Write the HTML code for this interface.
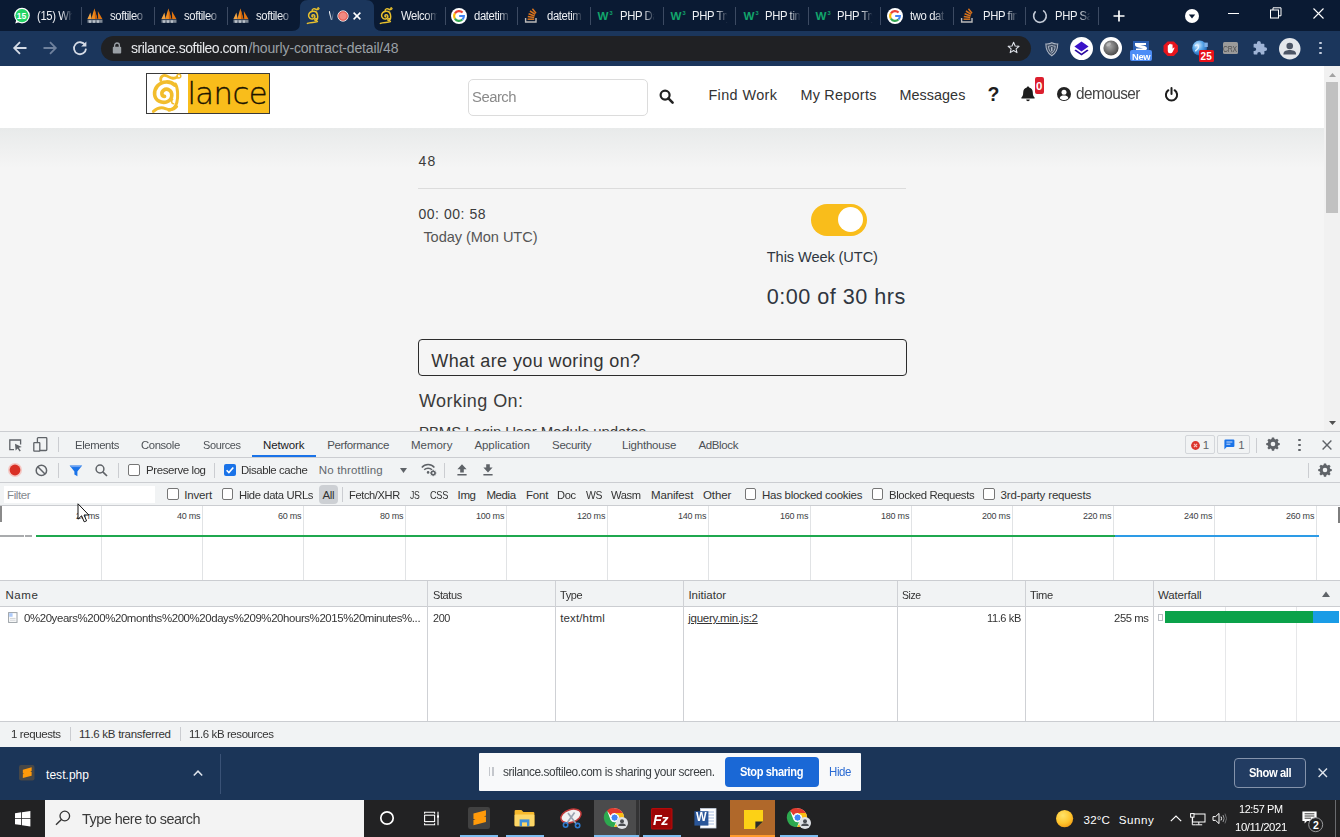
<!DOCTYPE html>
<html lang="en"><head><meta charset="utf-8"><title>srilance - hourly contract detail</title>
<style>
html,body{margin:0;padding:0}
body{width:1340px;height:837px;overflow:hidden;position:relative;background:#f7f7f7;font-family:"Liberation Sans",sans-serif}
.a{position:absolute;box-sizing:border-box}
.t{white-space:nowrap}
svg{overflow:visible}
</style></head><body>
<div class="a" style="left:0px;top:0px;width:1340px;height:31px;background:#0a1a33;"></div>
<div class="a" style="left:0px;top:31px;width:1340px;height:35px;background:#1b365c;"></div>
<svg class="a" style="left:292px;top:0px;" width="90" height="31" viewBox="0 0 90 31"><path d="M0 31 Q8 31 8 23 L8 8 Q8 0 16 0 L74 0 Q82 0 82 8 L82 23 Q82 31 90 31 Z" fill="#1b365c"/></svg>
<div class="a" style="left:101px;top:35.7px;width:930px;height:25.5px;background:#202124;border-radius:13px;"></div>
<svg class="a" style="left:13px;top:7px;" width="18" height="18" viewBox="0 0 18 18"><circle cx="9" cy="8.6" r="7.8" fill="#fff"/><path d="M2.2 16.6 L3.6 12 L7 14.8 Z" fill="#fff"/><circle cx="9" cy="8.6" r="6.6" fill="#25d366"/></svg>
<span class="a t" style="left:16.8px;top:9px;font-size:8.5px;line-height:14px;color:#fff;letter-spacing:-0.055px;font-weight:700;">15</span>
<span class="a t" style="left:37px;top:7px;font-size:12px;line-height:18px;color:#eef0f4;width:38.3px;overflow:hidden;letter-spacing:-0.4px;transform:scaleX(0.94);transform-origin:left center;-webkit-mask-image:linear-gradient(to right,#000 68%,transparent 100%);mask-image:linear-gradient(to right,#000 68%,transparent 100%);">(15) Wh</span>
<svg class="a" style="left:87px;top:8px;" width="16" height="16" viewBox="0 0 16 16"><path d="M7.4 0.6 L10.4 11 L4.2 11 Z" fill="#f08c1e"/><path d="M3.4 4.4 L4.6 11 L0.4 11 Z" fill="#f3a443"/><path d="M10.8 3 L15.4 11 L11.2 11 Z" fill="#e27510"/><path d="M7.4 0.6 L8 11 L10.4 11Z" fill="#c9600c"/><rect x="0.5" y="11.6" width="15" height="3.2" fill="#7d8794"/><rect x="2" y="12.3" width="2" height="2.5" fill="#b9c0c9"/><rect x="6" y="12.3" width="2" height="2.5" fill="#b9c0c9"/><rect x="10" y="12.3" width="2" height="2.5" fill="#b9c0c9"/></svg>
<span class="a t" style="left:110px;top:7px;font-size:12px;line-height:18px;color:#eef0f4;width:39.4px;overflow:hidden;letter-spacing:-0.4px;transform:scaleX(0.94);transform-origin:left center;-webkit-mask-image:linear-gradient(to right,#000 68%,transparent 100%);mask-image:linear-gradient(to right,#000 68%,transparent 100%);">softileo</span>
<svg class="a" style="left:161px;top:8px;" width="16" height="16" viewBox="0 0 16 16"><path d="M7.4 0.6 L10.4 11 L4.2 11 Z" fill="#f08c1e"/><path d="M3.4 4.4 L4.6 11 L0.4 11 Z" fill="#f3a443"/><path d="M10.8 3 L15.4 11 L11.2 11 Z" fill="#e27510"/><path d="M7.4 0.6 L8 11 L10.4 11Z" fill="#c9600c"/><rect x="0.5" y="11.6" width="15" height="3.2" fill="#7d8794"/><rect x="2" y="12.3" width="2" height="2.5" fill="#b9c0c9"/><rect x="6" y="12.3" width="2" height="2.5" fill="#b9c0c9"/><rect x="10" y="12.3" width="2" height="2.5" fill="#b9c0c9"/></svg>
<span class="a t" style="left:184px;top:7px;font-size:12px;line-height:18px;color:#eef0f4;width:39.4px;overflow:hidden;letter-spacing:-0.4px;transform:scaleX(0.94);transform-origin:left center;-webkit-mask-image:linear-gradient(to right,#000 68%,transparent 100%);mask-image:linear-gradient(to right,#000 68%,transparent 100%);">softileo</span>
<svg class="a" style="left:233px;top:8px;" width="16" height="16" viewBox="0 0 16 16"><path d="M7.4 0.6 L10.4 11 L4.2 11 Z" fill="#f08c1e"/><path d="M3.4 4.4 L4.6 11 L0.4 11 Z" fill="#f3a443"/><path d="M10.8 3 L15.4 11 L11.2 11 Z" fill="#e27510"/><path d="M7.4 0.6 L8 11 L10.4 11Z" fill="#c9600c"/><rect x="0.5" y="11.6" width="15" height="3.2" fill="#7d8794"/><rect x="2" y="12.3" width="2" height="2.5" fill="#b9c0c9"/><rect x="6" y="12.3" width="2" height="2.5" fill="#b9c0c9"/><rect x="10" y="12.3" width="2" height="2.5" fill="#b9c0c9"/></svg>
<span class="a t" style="left:256px;top:7px;font-size:12px;line-height:18px;color:#eef0f4;width:39.4px;overflow:hidden;letter-spacing:-0.4px;transform:scaleX(0.94);transform-origin:left center;-webkit-mask-image:linear-gradient(to right,#000 68%,transparent 100%);mask-image:linear-gradient(to right,#000 68%,transparent 100%);">softileo</span>
<svg class="a" style="left:378px;top:7px;" width="16" height="18" viewBox="0 0 16 18"><g fill="none" stroke="#e9c12d" stroke-width="1.5" stroke-linecap="round"><path d="M11.6 5.4 C9 3.2 4.2 4.2 3.6 8 C3.2 11 6.2 12.8 8.6 11.6 C10.6 10.6 10.2 7.6 8 7.8 C6.6 8 6.6 9.8 7.8 9.8"/><path d="M11.4 5.6 C13.2 7.6 13 12 11.6 13.4 C10.6 14.4 9.4 13.4 10 12.2 C10.6 11.2 12 11.8 11.8 13"/><path d="M2.4 16.4 C5.4 15 9.6 15.8 12.4 14.6"/><path d="M7.2 3.6 C7 1.8 9.4 1.2 10.6 2.2 C11.8 3.2 13.4 2.6 13.2 1.2"/></g><circle cx="13.3" cy="1.6" r="1" fill="none" stroke="#e9c12d" stroke-width="0.9"/></svg>
<span class="a t" style="left:401px;top:7px;font-size:12px;line-height:18px;color:#eef0f4;width:39.4px;overflow:hidden;letter-spacing:-0.4px;transform:scaleX(0.94);transform-origin:left center;-webkit-mask-image:linear-gradient(to right,#000 68%,transparent 100%);mask-image:linear-gradient(to right,#000 68%,transparent 100%);">Welcom</span>
<svg class="a" style="left:451px;top:8px;" width="16" height="16" viewBox="0 0 16 16"><circle cx="8" cy="8" r="8" fill="#fff"/><g fill="none" stroke-width="2.1"><path d="M11.6 4.6 A4.9 4.9 0 0 0 3.9 5.4" stroke="#ea4335"/><path d="M3.9 5.4 A4.9 4.9 0 0 0 3.9 10.6" stroke="#fbbc05"/><path d="M3.9 10.6 A4.9 4.9 0 0 0 11.4 11.6" stroke="#34a853"/><path d="M11.4 11.6 A4.9 4.9 0 0 0 12.9 8 L8.2 8" stroke="#4285f4"/></g></svg>
<span class="a t" style="left:474px;top:7px;font-size:12px;line-height:18px;color:#eef0f4;width:39.4px;overflow:hidden;letter-spacing:-0.4px;transform:scaleX(0.94);transform-origin:left center;-webkit-mask-image:linear-gradient(to right,#000 68%,transparent 100%);mask-image:linear-gradient(to right,#000 68%,transparent 100%);">datetim</span>
<svg class="a" style="left:524px;top:8px;" width="14" height="16" viewBox="0 0 14 16"><g stroke="#d9731c" stroke-width="1.5" fill="none"><path d="M3.6 11.2 L10.2 11.2"/><path d="M3.8 8.6 L10.2 9.6"/><path d="M4.6 5.8 L10.6 8"/><path d="M6 3 L11.2 6.4"/><path d="M8.4 0.8 L12 5.2"/></g><path d="M1.6 10 L1.6 14 L12 14 L12 10" fill="none" stroke="#bcbbbb" stroke-width="1.4"/></svg>
<span class="a t" style="left:547px;top:7px;font-size:12px;line-height:18px;color:#eef0f4;width:38.3px;overflow:hidden;letter-spacing:-0.4px;transform:scaleX(0.94);transform-origin:left center;-webkit-mask-image:linear-gradient(to right,#000 68%,transparent 100%);mask-image:linear-gradient(to right,#000 68%,transparent 100%);">datetim</span>
<span class="a t" style="left:597.4px;top:8px;font-size:11.6px;line-height:16px;color:#12a56c;letter-spacing:0.652px;font-weight:700;">W</span>
<span class="a t" style="left:609.4px;top:8px;font-size:5.6px;line-height:10px;color:#12a56c;font-weight:700;">3</span>
<span class="a t" style="left:620px;top:7px;font-size:12px;line-height:18px;color:#eef0f4;width:37.2px;overflow:hidden;letter-spacing:-0.4px;transform:scaleX(0.94);transform-origin:left center;-webkit-mask-image:linear-gradient(to right,#000 68%,transparent 100%);mask-image:linear-gradient(to right,#000 68%,transparent 100%);">PHP Da</span>
<span class="a t" style="left:670.4px;top:8px;font-size:11.6px;line-height:16px;color:#12a56c;letter-spacing:0.652px;font-weight:700;">W</span>
<span class="a t" style="left:682.4px;top:8px;font-size:5.6px;line-height:10px;color:#12a56c;font-weight:700;">3</span>
<span class="a t" style="left:692px;top:7px;font-size:12px;line-height:18px;color:#eef0f4;width:38.3px;overflow:hidden;letter-spacing:-0.4px;transform:scaleX(0.94);transform-origin:left center;-webkit-mask-image:linear-gradient(to right,#000 68%,transparent 100%);mask-image:linear-gradient(to right,#000 68%,transparent 100%);">PHP Try</span>
<span class="a t" style="left:743.4px;top:8px;font-size:11.6px;line-height:16px;color:#12a56c;letter-spacing:0.652px;font-weight:700;">W</span>
<span class="a t" style="left:755.4px;top:8px;font-size:5.6px;line-height:10px;color:#12a56c;font-weight:700;">3</span>
<span class="a t" style="left:765px;top:7px;font-size:12px;line-height:18px;color:#eef0f4;width:38.3px;overflow:hidden;letter-spacing:-0.4px;transform:scaleX(0.94);transform-origin:left center;-webkit-mask-image:linear-gradient(to right,#000 68%,transparent 100%);mask-image:linear-gradient(to right,#000 68%,transparent 100%);">PHP tim</span>
<span class="a t" style="left:815.4px;top:8px;font-size:11.6px;line-height:16px;color:#12a56c;letter-spacing:0.652px;font-weight:700;">W</span>
<span class="a t" style="left:827.4px;top:8px;font-size:5.6px;line-height:10px;color:#12a56c;font-weight:700;">3</span>
<span class="a t" style="left:837px;top:7px;font-size:12px;line-height:18px;color:#eef0f4;width:38.3px;overflow:hidden;letter-spacing:-0.4px;transform:scaleX(0.94);transform-origin:left center;-webkit-mask-image:linear-gradient(to right,#000 68%,transparent 100%);mask-image:linear-gradient(to right,#000 68%,transparent 100%);">PHP Try</span>
<svg class="a" style="left:887px;top:8px;" width="16" height="16" viewBox="0 0 16 16"><circle cx="8" cy="8" r="8" fill="#fff"/><g fill="none" stroke-width="2.1"><path d="M11.6 4.6 A4.9 4.9 0 0 0 3.9 5.4" stroke="#ea4335"/><path d="M3.9 5.4 A4.9 4.9 0 0 0 3.9 10.6" stroke="#fbbc05"/><path d="M3.9 10.6 A4.9 4.9 0 0 0 11.4 11.6" stroke="#34a853"/><path d="M11.4 11.6 A4.9 4.9 0 0 0 12.9 8 L8.2 8" stroke="#4285f4"/></g></svg>
<span class="a t" style="left:910px;top:7px;font-size:12px;line-height:18px;color:#eef0f4;width:38.3px;overflow:hidden;letter-spacing:-0.4px;transform:scaleX(0.94);transform-origin:left center;-webkit-mask-image:linear-gradient(to right,#000 68%,transparent 100%);mask-image:linear-gradient(to right,#000 68%,transparent 100%);">two dat</span>
<svg class="a" style="left:960px;top:8px;" width="14" height="16" viewBox="0 0 14 16"><g stroke="#d9731c" stroke-width="1.5" fill="none"><path d="M3.6 11.2 L10.2 11.2"/><path d="M3.8 8.6 L10.2 9.6"/><path d="M4.6 5.8 L10.6 8"/><path d="M6 3 L11.2 6.4"/><path d="M8.4 0.8 L12 5.2"/></g><path d="M1.6 10 L1.6 14 L12 14 L12 10" fill="none" stroke="#bcbbbb" stroke-width="1.4"/></svg>
<span class="a t" style="left:983px;top:7px;font-size:12px;line-height:18px;color:#eef0f4;width:37.2px;overflow:hidden;letter-spacing:-0.4px;transform:scaleX(0.94);transform-origin:left center;-webkit-mask-image:linear-gradient(to right,#000 68%,transparent 100%);mask-image:linear-gradient(to right,#000 68%,transparent 100%);">PHP fin</span>
<svg class="a" style="left:1032px;top:8px;" width="16" height="16" viewBox="0 0 16 16"><path d="M3.2 3.9 A6.3 6.3 0 1 0 11.6 2.9" fill="none" stroke="#c3cad6" stroke-width="1.6" stroke-linecap="round"/></svg>
<span class="a t" style="left:1055px;top:7px;font-size:12px;line-height:18px;color:#eef0f4;width:38.3px;overflow:hidden;letter-spacing:-0.4px;transform:scaleX(0.94);transform-origin:left center;-webkit-mask-image:linear-gradient(to right,#000 68%,transparent 100%);mask-image:linear-gradient(to right,#000 68%,transparent 100%);">PHP Sa</span>
<div class="a" style="left:81px;top:7px;width:1px;height:18px;background:#3c4a62;"></div>
<div class="a" style="left:154px;top:7px;width:1px;height:18px;background:#3c4a62;"></div>
<div class="a" style="left:227px;top:7px;width:1px;height:18px;background:#3c4a62;"></div>
<div class="a" style="left:445px;top:7px;width:1px;height:18px;background:#3c4a62;"></div>
<div class="a" style="left:517px;top:7px;width:1px;height:18px;background:#3c4a62;"></div>
<div class="a" style="left:590px;top:7px;width:1px;height:18px;background:#3c4a62;"></div>
<div class="a" style="left:663px;top:7px;width:1px;height:18px;background:#3c4a62;"></div>
<div class="a" style="left:735px;top:7px;width:1px;height:18px;background:#3c4a62;"></div>
<div class="a" style="left:808px;top:7px;width:1px;height:18px;background:#3c4a62;"></div>
<div class="a" style="left:880px;top:7px;width:1px;height:18px;background:#3c4a62;"></div>
<div class="a" style="left:953px;top:7px;width:1px;height:18px;background:#3c4a62;"></div>
<div class="a" style="left:1025px;top:7px;width:1px;height:18px;background:#3c4a62;"></div>
<div class="a" style="left:1098px;top:7px;width:1px;height:18px;background:#3c4a62;"></div>
<svg class="a" style="left:305px;top:7px;" width="16" height="18" viewBox="0 0 16 18"><g fill="none" stroke="#e9c12d" stroke-width="1.5" stroke-linecap="round"><path d="M11.6 5.4 C9 3.2 4.2 4.2 3.6 8 C3.2 11 6.2 12.8 8.6 11.6 C10.6 10.6 10.2 7.6 8 7.8 C6.6 8 6.6 9.8 7.8 9.8"/><path d="M11.4 5.6 C13.2 7.6 13 12 11.6 13.4 C10.6 14.4 9.4 13.4 10 12.2 C10.6 11.2 12 11.8 11.8 13"/><path d="M2.4 16.4 C5.4 15 9.6 15.8 12.4 14.6"/><path d="M7.2 3.6 C7 1.8 9.4 1.2 10.6 2.2 C11.8 3.2 13.4 2.6 13.2 1.2"/></g><circle cx="13.3" cy="1.6" r="1" fill="none" stroke="#e9c12d" stroke-width="0.9"/></svg>
<span class="a t" style="left:328.5px;top:7px;font-size:12px;line-height:18px;color:#e6e9ef;width:5px;overflow:hidden;-webkit-mask-image:linear-gradient(to right,#000 20%,transparent 100%);mask-image:linear-gradient(to right,#000 20%,transparent 100%);">W</span>
<svg class="a" style="left:337px;top:10px;" width="12" height="12" viewBox="0 0 12 12"><circle cx="6" cy="6" r="5.2" fill="#f28b82" stroke="#e8eaed" stroke-width="0.9"/><circle cx="6" cy="6" r="4.2" fill="none" stroke="#d93025" stroke-width="0.6"/></svg>
<svg class="a" style="left:353px;top:12px;" width="8" height="8" viewBox="0 0 8 8"><path d="M0.6 0.6 L7.4 7.4 M7.4 0.6 L0.6 7.4" stroke="#fff" stroke-width="1.5"/></svg>
<svg class="a" style="left:1113px;top:10px;" width="12" height="12" viewBox="0 0 12 12"><path d="M6 0.5 V11.5 M0.5 6 H11.5" stroke="#fff" stroke-width="1.7"/></svg>
<svg class="a" style="left:1185px;top:9px;" width="14" height="14" viewBox="0 0 14 14"><circle cx="7" cy="7" r="7" fill="#fff"/><path d="M3.8 5.4 H10.2 L7 9.6 Z" fill="#0a1a33"/></svg>
<div class="a" style="left:1228px;top:13px;width:11px;height:1px;background:#fff;"></div>
<svg class="a" style="left:1270px;top:7px;" width="12" height="12" viewBox="0 0 12 12"><rect x="0.5" y="3" width="8" height="8" fill="none" stroke="#fff" stroke-width="1"/><path d="M3 3 V0.8 H11 V8.8 H8.6" fill="none" stroke="#fff" stroke-width="1"/></svg>
<svg class="a" style="left:1313px;top:8px;" width="11" height="11" viewBox="0 0 11 11"><path d="M0.5 0.5 L10.5 10.5 M10.5 0.5 L0.5 10.5" stroke="#fff" stroke-width="1.1"/></svg>
<svg class="a" style="left:12px;top:40px;" width="16" height="16" viewBox="0 0 16 16"><path d="M14.5 8 H2.6 M8 2.2 L2.2 8 L8 13.8" fill="none" stroke="#d5dbe6" stroke-width="1.8"/></svg>
<svg class="a" style="left:42px;top:40px;" width="16" height="16" viewBox="0 0 16 16"><path d="M1.5 8 H13.4 M8 2.2 L13.8 8 L8 13.8" fill="none" stroke="#6f819d" stroke-width="1.8"/></svg>
<svg class="a" style="left:72px;top:40px;" width="16" height="16" viewBox="0 0 16 16"><path d="M13.2 5.2 A6 6 0 1 0 14 8.6" fill="none" stroke="#d5dbe6" stroke-width="1.8"/><path d="M14.4 1.4 V6.6 H9.2 Z" fill="#d5dbe6"/></svg>
<svg class="a" style="left:112px;top:42px;" width="10" height="12" viewBox="0 0 10 12"><rect x="0.8" y="4.8" width="8.4" height="6.8" rx="1" fill="#9aa0a6"/><path d="M2.6 5 V3.4 A2.4 2.4 0 0 1 7.4 3.4 V5" fill="none" stroke="#9aa0a6" stroke-width="1.3"/></svg>
<span class="a t" style="left:131px;top:38px;font-size:14px;line-height:20px;color:#e8eaed;letter-spacing:-0.490px;transform:scaleX(0.9997);transform-origin:left center;">srilance.softileo.com</span>
<span class="a t" style="left:248.5px;top:38px;font-size:14px;line-height:20px;color:#9aa0a6;letter-spacing:-0.163px;">/hourly-contract-detail/48</span>
<svg class="a" style="left:1007.4px;top:41.4px;" width="13.2" height="13.2" viewBox="0 0 16 16"><path d="M8 1.6 L9.9 6 L14.6 6.4 L11 9.5 L12.1 14.1 L8 11.6 L3.9 14.1 L5 9.5 L1.4 6.4 L6.1 6 Z" fill="none" stroke="#dfe3ea" stroke-width="1.3" stroke-linejoin="round"/></svg>
<svg class="a" style="left:1044.6px;top:41.6px;" width="13.6" height="14.5" viewBox="0 0 16 17"><path d="M8 0.8 C10 2 12.6 2.4 15 2.2 C15 8 13 13 8 16.2 C3 13 1 8 1 2.2 C3.4 2.4 6 2 8 0.8 Z" fill="#3b4b63" stroke="#aeb6c4" stroke-width="1.2"/><path d="M8 4 C9.2 4.6 10.6 4.9 12 4.9 C11.8 8.4 10.6 11.2 8 13.2 C5.4 11.2 4.2 8.4 4 4.9 C5.4 4.9 6.8 4.6 8 4 Z" fill="none" stroke="#c9d0da" stroke-width="0.9"/><rect x="7.3" y="6" width="1.4" height="5" fill="#c9d0da"/></svg>
<svg class="a" style="left:1069.5px;top:36.5px;" width="23" height="23" viewBox="0 0 23 23"><circle cx="11.5" cy="11.5" r="11.5" fill="#fff"/><path d="M11.5 4.6 L18.6 9.6 L11.5 14.6 L4.4 9.6 Z" fill="#3a12c8"/><path d="M5.8 12.4 L11.5 16.4 L17.2 12.4 L18.6 13.4 L11.5 18.4 L4.4 13.4 Z" fill="#2a0aa0"/></svg>
<svg class="a" style="left:1100px;top:37.4px;" width="22" height="22" viewBox="0 0 22 22"><defs><radialGradient id="gb" cx="40%" cy="38%" r="65%"><stop offset="0" stop-color="#a9a9a9"/><stop offset="1" stop-color="#4a4a4a"/></radialGradient></defs><circle cx="11" cy="11" r="11" fill="#fff"/><circle cx="11" cy="11" r="7.6" fill="url(#gb)"/><ellipse cx="8.6" cy="7.4" rx="2.6" ry="1.6" fill="#c9c9c9" opacity="0.7" transform="rotate(-35 8.6 7.4)"/></svg>
<svg class="a" style="left:1133px;top:41px;" width="16" height="10" viewBox="0 0 16 10"><rect x="0" y="0" width="16" height="10" fill="#2a5db0"/><path d="M2 2 H13 V4 H6 C9 4 14 5 14 7.4 C14 9 12 9.4 10 9.4 H3 V7.6 H10 C8 7 2 6.4 2 4 Z" fill="#fff"/></svg>
<div class="a" style="left:1129.8px;top:50.2px;width:22.2px;height:11.2px;background:#4d8df6;border-radius:2px;"></div>
<span class="a t" style="left:1131.6px;top:49px;font-size:9.5px;line-height:15px;color:#fff;letter-spacing:-0.333px;transform:scaleX(0.9858);transform-origin:left center;font-weight:700;">New</span>
<svg class="a" style="left:1162.9px;top:40.7px;" width="15.4" height="15.4" viewBox="0 0 18 18"><path d="M5.4 0.6 H12.6 L17.4 5.4 V12.6 L12.6 17.4 H5.4 L0.6 12.6 V5.4 Z" fill="#e8141c"/><path d="M5.6 9.6 V5.6 Q5.6 4.8 6.3 4.8 Q7 4.8 7 5.6 V4.4 Q7 3.6 7.7 3.6 Q8.4 3.6 8.4 4.4 V3.9 Q8.4 3.1 9.1 3.1 Q9.8 3.1 9.8 3.9 V4.6 Q9.8 3.9 10.5 3.9 Q11.2 3.9 11.2 4.7 V9 L12.4 7.8 Q13.2 7.2 13.6 8 L11.4 12.6 Q10.6 14.4 8.8 14.4 H8 Q5.6 14.4 5.6 11.6 Z" fill="#fff"/></svg>
<svg class="a" style="left:1192.4px;top:40.4px;" width="17" height="17" viewBox="0 0 17 17"><defs><radialGradient id="gl" cx="38%" cy="32%" r="70%"><stop offset="0" stop-color="#d8ecff"/><stop offset="0.5" stop-color="#58a6e8"/><stop offset="1" stop-color="#1c5fae"/></radialGradient></defs><circle cx="7.6" cy="8" r="7.4" fill="url(#gl)"/><path d="M3 6 C5 4 7 5 6.4 7.6 C6 9.6 4 9.4 3.4 11.4" fill="none" stroke="#e6f3ff" stroke-width="1.4"/><rect x="12.4" y="2.6" width="3.4" height="4.4" fill="#7fb0e6"/></svg>
<div class="a" style="left:1198.5px;top:50px;width:15.5px;height:12px;background:#e8111a;border-radius:1.5px;"></div>
<span class="a t" style="left:1200.4px;top:49px;font-size:10px;line-height:15px;color:#fff;letter-spacing:0.277px;font-weight:700;">25</span>
<div class="a" style="left:1222.8px;top:42px;width:15.2px;height:12.4px;background:#9a9a9a;border-radius:1.5px;"></div>
<span class="a t" style="left:1223.4px;top:42px;font-size:8.4px;line-height:14px;color:#505050;letter-spacing:-0.294px;transform:scaleX(0.8164);transform-origin:left center;">CRX</span>
<svg class="a" style="left:1250.6px;top:40px;" width="16" height="16" viewBox="0 0 16 16"><path d="M6 2.8 A1.9 1.9 0 0 1 9.8 2.8 V3.8 H12.6 Q13.4 3.8 13.4 4.6 V7.2 H14.2 A1.9 1.9 0 0 1 14.2 11 H13.4 V13.8 Q13.4 14.6 12.6 14.6 H9.9 V13.7 A1.8 1.8 0 0 0 6.3 13.7 V14.6 H3.4 Q2.6 14.6 2.6 13.8 V11 H3.4 A1.8 1.8 0 0 0 3.4 7.4 H2.6 V4.6 Q2.6 3.8 3.4 3.8 H6 Z" fill="#9fb4d6"/></svg>
<svg class="a" style="left:1279px;top:37.5px;" width="21.5" height="21.5" viewBox="0 0 21.5 21.5"><circle cx="10.75" cy="10.75" r="10.75" fill="#e4e7ec"/><circle cx="10.75" cy="8" r="3.3" fill="#4c5566"/><path d="M4.4 16.4 C4.4 12.6 8 12 10.75 12 C13.5 12 17.1 12.6 17.1 16.4 Z" fill="#4c5566"/></svg>
<div class="a" style="left:1319px;top:41.8px;width:2.6px;height:2.6px;background:#c5cede;border-radius:50%;"></div>
<div class="a" style="left:1319px;top:46.8px;width:2.6px;height:2.6px;background:#c5cede;border-radius:50%;"></div>
<div class="a" style="left:1319px;top:51.8px;width:2.6px;height:2.6px;background:#c5cede;border-radius:50%;"></div>
<div class="a" style="left:0px;top:66px;width:1340px;height:366px;background:#f5f5f5;"></div>
<div class="a" style="left:0px;top:128px;width:1324px;height:40px;background:linear-gradient(#e8eaea,#f5f5f5);"></div>
<div class="a" style="left:0px;top:66px;width:1324px;height:62px;background:#fff;"></div>
<div class="a" style="left:1324px;top:66px;width:16px;height:366px;background:#f1f1f1;"></div>
<div class="a" style="left:1326px;top:82px;width:12px;height:131px;background:#c1c1c1;"></div>
<svg class="a" style="left:1328.6px;top:72.6px;" width="7" height="4" viewBox="0 0 7 4"><path d="M0 4 L3.5 0 L7 4 Z" fill="#a3a3a3"/></svg>
<svg class="a" style="left:1328.8px;top:421px;" width="7" height="4" viewBox="0 0 7 4"><path d="M0 0 L3.5 4 L7 0 Z" fill="#505050"/></svg>
<div class="a" style="left:146px;top:73px;width:124px;height:41px;background:#fff;border:1px solid #3a3a3a;"></div>
<div class="a" style="left:188px;top:74px;width:81px;height:39px;background:#f9bd1b;"></div>
<svg class="a" style="left:150px;top:73px;" width="34" height="41" viewBox="0 0 34 41"><g fill="none" stroke="#f2bd2c" stroke-linecap="round" stroke-linejoin="round"><path d="M24.6 12.2 C21 7.8 12 7.6 7.4 13 C3.2 18 3.6 25.4 9 28.2 C14.6 31 21.4 28.6 21.8 22.6 C22.2 17.6 17 14.6 13.6 17.2 C10.8 19.4 11.6 23.4 14.6 23.4" stroke-width="3.6"/><path d="M25.4 11 C28 15 28.2 24 26.8 29.6 C25.6 34 23 36.6 19 37.2" stroke-width="3"/><path d="M3.4 38.4 C7 35.2 11.4 34 15.4 35.6 C19 37 23.4 37.4 26.6 33.6" stroke-width="3"/><path d="M10.8 7.6 C10 3.4 13.6 1.2 17 3 C20.4 4.8 23.6 6.6 27 4.2" stroke-width="2.8"/><circle cx="28.9" cy="3.2" r="1.9" stroke-width="1.5"/><path d="M22.6 26.4 C21 27.8 21.4 30.6 23.6 30.8" stroke-width="1.6"/></g></svg>
<span class="a t" style="left:187.4px;top:74px;font-size:30.6px;line-height:39px;color:#1c1400;letter-spacing:-0.55px;font-weight:200;font-family:'DejaVu Sans','Liberation Sans',sans-serif;-webkit-text-stroke:0.35px #1c1400;">lance</span>
<div class="a" style="left:468px;top:79px;width:180px;height:37px;background:#fff;border:1px solid #dcdcdc;border-radius:5px;"></div>
<span class="a t" style="left:472px;top:86px;font-size:15.5px;line-height:21px;color:#8a8a8a;letter-spacing:-0.543px;transform:scaleX(0.9590);transform-origin:left center;">Search</span>
<svg class="a" style="left:658.5px;top:88.8px;" width="15" height="15" viewBox="0 0 15 15"><circle cx="6.1" cy="6.1" r="4.5" fill="none" stroke="#222" stroke-width="2.2"/><path d="M9.4 9.4 L13.6 13.6" stroke="#222" stroke-width="2.6" stroke-linecap="round"/></svg>
<span class="a t" style="left:708.4px;top:85px;font-size:14.4px;line-height:20px;color:#333;letter-spacing:0.406px;">Find Work</span>
<span class="a t" style="left:800.4px;top:85px;font-size:14.4px;line-height:20px;color:#333;letter-spacing:0.265px;">My Reports</span>
<span class="a t" style="left:899.4px;top:85px;font-size:14.4px;line-height:20px;color:#333;letter-spacing:0.053px;">Messages</span>
<span class="a t" style="left:987.6px;top:81px;font-size:19.5px;line-height:26px;color:#1d1d1d;font-weight:700;">?</span>
<svg class="a" style="left:1020.5px;top:86px;" width="14" height="15.5" viewBox="0 0 14 15.5"><path d="M7 0.4 C7.7 0.4 8.2 0.9 8.2 1.6 C10.6 2.2 11.8 4.2 11.8 6.6 C11.8 9.6 12.6 10.6 13.6 11.6 V12.6 H0.4 V11.6 C1.4 10.6 2.2 9.6 2.2 6.6 C2.2 4.2 3.4 2.2 5.8 1.6 C5.8 0.9 6.3 0.4 7 0.4 Z" fill="#1d1d1d"/><path d="M5.2 13.4 H8.8 A1.8 1.8 0 0 1 5.2 13.4 Z" fill="#1d1d1d"/></svg>
<div class="a" style="left:1034.5px;top:77px;width:9px;height:16.5px;background:#dc1f2e;border-radius:2px;"></div>
<span class="a t" style="left:1036px;top:78px;font-size:11.5px;line-height:16px;color:#fff;letter-spacing:-0.196px;font-weight:700;">0</span>
<svg class="a" style="left:1057px;top:87.2px;" width="14" height="14" viewBox="0 0 14 14"><circle cx="7" cy="7" r="7" fill="#222"/><circle cx="7" cy="5.2" r="2.5" fill="#fff"/><path d="M2.6 11.2 C3.2 8.8 5 8.4 7 8.4 C9 8.4 10.8 8.8 11.4 11.2 C10.2 12.4 8.8 13 7 13 C5.2 13 3.8 12.4 2.6 11.2 Z" fill="#fff"/></svg>
<span class="a t" style="left:1076px;top:83px;font-size:15.6px;line-height:21px;color:#444;letter-spacing:-0.546px;transform:scaleX(0.9840);transform-origin:left center;">demouser</span>
<svg class="a" style="left:1164px;top:86.6px;" width="15" height="15" viewBox="0 0 15 15"><path d="M4.4 3.2 A5.6 5.6 0 1 0 10.6 3.2" fill="none" stroke="#1d1d1d" stroke-width="2" stroke-linecap="round"/><path d="M7.5 0.9 V7" stroke="#1d1d1d" stroke-width="2" stroke-linecap="round"/></svg>
<span class="a t" style="left:418.4px;top:151px;font-size:14px;line-height:20px;color:#3b3b3b;letter-spacing:1.427px;">48</span>
<div class="a" style="left:418px;top:187.5px;width:488px;height:1px;background:#dcdcdc;"></div>
<span class="a t" style="left:418.4px;top:204px;font-size:14px;line-height:20px;color:#3b3b3b;letter-spacing:0.547px;">00: 00: 58</span>
<span class="a t" style="left:423.4px;top:227px;font-size:14.6px;line-height:20px;color:#555;letter-spacing:-0.072px;">Today (Mon UTC)</span>
<div class="a" style="left:810.5px;top:204px;width:56px;height:31.5px;background:#f9bd1b;border-radius:16px;"></div>
<div class="a" style="left:837.8px;top:207px;width:25px;height:25px;background:#fff;border-radius:50%;"></div>
<span class="a t" style="left:766.8px;top:247px;font-size:14.6px;line-height:20px;color:#2f3640;letter-spacing:-0.092px;">This Week (UTC)</span>
<span class="a t" style="left:766.8px;top:282px;font-size:21.6px;line-height:29px;color:#2f3640;letter-spacing:0.501px;">0:00 of 30 hrs</span>
<div class="a" style="left:418px;top:339px;width:489px;height:37px;border:1px solid #2c2c2c;border-radius:4px;"></div>
<span class="a t" style="left:431.3px;top:349px;font-size:18px;line-height:24px;color:#333;letter-spacing:0.395px;">What are you woring on?</span>
<span class="a t" style="left:419px;top:389px;font-size:18px;line-height:24px;color:#3b3b3b;letter-spacing:0.430px;">Working On:</span>
<span class="a t" style="left:419px;top:421px;font-size:15px;line-height:21px;color:#3b3b3b;letter-spacing:-0.108px;">PBMS Login User Module updates</span>
<div class="a" style="left:0px;top:431px;width:1340px;height:316px;background:#fff;border-top:1px solid #cbcdd1;"></div>
<div class="a" style="left:0px;top:432px;width:1340px;height:26px;background:#f1f3f4;border-bottom:1px solid #cbcdd1;"></div>
<div class="a" style="left:0px;top:458px;width:1340px;height:25px;background:#f1f3f4;border-bottom:1px solid #cbcdd1;"></div>
<div class="a" style="left:0px;top:483px;width:1340px;height:23px;background:#f1f3f4;border-bottom:1px solid #cbcdd1;"></div>
<svg class="a" style="left:9px;top:438.5px;" width="14" height="13" viewBox="0 0 14 13"><path d="M11.6 5.4 V1 H0.8 V10.6 H5" fill="none" stroke="#5f6368" stroke-width="1.3"/><path d="M6 4.8 L12.8 8 L9.8 8.8 L11.8 11.8 L10.6 12.6 L8.6 9.6 L6.6 11.6 Z" fill="#5f6368"/></svg>
<svg class="a" style="left:33px;top:437px;" width="15" height="15" viewBox="0 0 15 15"><rect x="4.4" y="0.7" width="9.4" height="12.8" rx="0.8" fill="none" stroke="#5f6368" stroke-width="1.3"/><rect x="0.8" y="5.6" width="6" height="8.6" rx="0.6" fill="#f1f3f4" stroke="#5f6368" stroke-width="1.3"/></svg>
<div class="a" style="left:58px;top:437px;width:1px;height:15px;background:#cbcdd1;"></div>
<span class="a t" style="left:75px;top:437px;font-size:11.5px;line-height:16px;color:#4d5156;letter-spacing:-0.403px;transform:scaleX(0.9818);transform-origin:left center;">Elements</span>
<span class="a t" style="left:141.3px;top:437px;font-size:11.5px;line-height:16px;color:#4d5156;letter-spacing:-0.403px;transform:scaleX(0.9854);transform-origin:left center;">Console</span>
<span class="a t" style="left:202.5px;top:437px;font-size:11.5px;line-height:16px;color:#4d5156;letter-spacing:-0.403px;transform:scaleX(0.9554);transform-origin:left center;">Sources</span>
<span class="a t" style="left:263px;top:437px;font-size:11.5px;line-height:16px;color:#202124;letter-spacing:-0.113px;">Network</span>
<span class="a t" style="left:327.3px;top:437px;font-size:11.5px;line-height:16px;color:#4d5156;letter-spacing:-0.384px;">Performance</span>
<span class="a t" style="left:411px;top:437px;font-size:11.5px;line-height:16px;color:#4d5156;letter-spacing:-0.026px;">Memory</span>
<span class="a t" style="left:474.4px;top:437px;font-size:11.5px;line-height:16px;color:#4d5156;letter-spacing:-0.066px;">Application</span>
<span class="a t" style="left:552px;top:437px;font-size:11.5px;line-height:16px;color:#4d5156;letter-spacing:-0.292px;">Security</span>
<span class="a t" style="left:622px;top:437px;font-size:11.5px;line-height:16px;color:#4d5156;letter-spacing:-0.208px;">Lighthouse</span>
<span class="a t" style="left:698.4px;top:437px;font-size:11.5px;line-height:16px;color:#4d5156;letter-spacing:-0.365px;">AdBlock</span>
<div class="a" style="left:252px;top:455.4px;width:64.4px;height:2px;background:#1a73e8;"></div>
<div class="a" style="left:1185px;top:435px;width:30px;height:19px;border:1px solid #d3d6da;border-radius:2px;"></div>
<svg class="a" style="left:1191px;top:440.6px;" width="9" height="9" viewBox="0 0 9 9"><circle cx="4.5" cy="4.5" r="4.4" fill="#dc362e"/><path d="M2.9 2.9 L6.1 6.1 M6.1 2.9 L2.9 6.1" stroke="#f6c8c5" stroke-width="1.1"/></svg>
<span class="a t" style="left:1202.8px;top:437px;font-size:11.5px;line-height:16px;color:#5f6368;">1</span>
<div class="a" style="left:1217px;top:435px;width:33px;height:19px;border:1px solid #d3d6da;border-radius:2px;"></div>
<svg class="a" style="left:1224px;top:439px;" width="11" height="11" viewBox="0 0 11 11"><path d="M0.4 1.4 Q0.4 0.4 1.4 0.4 H9.4 Q10.4 0.4 10.4 1.4 V7 Q10.4 8 9.4 8 H2.6 L0.4 10.4 Z" fill="#1a73e8"/><path d="M2.4 3 H8.4 M2.4 5.2 H6.4" stroke="#cfe0fb" stroke-width="1"/></svg>
<span class="a t" style="left:1238.3px;top:437px;font-size:11.5px;line-height:16px;color:#5f6368;">1</span>
<div class="a" style="left:1255.5px;top:437.5px;width:1px;height:15px;background:#cbcdd1;"></div>
<svg class="a" style="left:1265.8px;top:437.3px;" width="14" height="14" viewBox="0 0 14 14"><path d="M7 4.7 A2.3 2.3 0 1 0 7 9.3 A2.3 2.3 0 1 0 7 4.7 Z M5.9 0.4 H8.1 L8.5 2.1 L9.6 2.6 L11.1 1.7 L12.6 3.2 L11.7 4.7 L12.1 5.8 L13.8 6.2 V8 L12.1 8.4 L11.7 9.5 L12.6 11 L11.1 12.5 L9.6 11.6 L8.5 12.1 L8.1 13.8 H5.9 L5.5 12.1 L4.4 11.6 L2.9 12.5 L1.4 11 L2.3 9.5 L1.9 8.4 L0.2 8 V6.2 L1.9 5.8 L2.3 4.7 L1.4 3.2 L2.9 1.7 L4.4 2.6 L5.5 2.1 Z" fill="#5f6368" fill-rule="evenodd"/></svg>
<div class="a" style="left:1297.8px;top:438.5px;width:2.8px;height:2.8px;background:#5f6368;border-radius:50%;"></div>
<div class="a" style="left:1297.8px;top:443.5px;width:2.8px;height:2.8px;background:#5f6368;border-radius:50%;"></div>
<div class="a" style="left:1297.8px;top:448.5px;width:2.8px;height:2.8px;background:#5f6368;border-radius:50%;"></div>
<svg class="a" style="left:1322px;top:440px;" width="10" height="10" viewBox="0 0 10 10"><path d="M0.6 0.6 L9.4 9.4 M9.4 0.6 L0.6 9.4" stroke="#5f6368" stroke-width="1.4"/></svg>
<svg class="a" style="left:7.5px;top:463px;" width="14" height="14" viewBox="0 0 14 14"><circle cx="7" cy="7" r="7" fill="#f4c7c3"/><circle cx="7" cy="7" r="5.4" fill="#d93025"/></svg>
<svg class="a" style="left:35px;top:464px;" width="13" height="13" viewBox="0 0 13 13"><circle cx="6.4" cy="6.4" r="5.2" fill="none" stroke="#5f6368" stroke-width="1.5"/><path d="M2.8 2.8 L10 10" stroke="#5f6368" stroke-width="1.5"/></svg>
<div class="a" style="left:58px;top:462.5px;width:1px;height:15px;background:#cbcdd1;"></div>
<svg class="a" style="left:68.5px;top:464.6px;" width="14" height="11.5" viewBox="0 0 14 11.5"><path d="M0.6 0.6 H13.2 L8.4 6.4 V11.2 L5.4 9.6 V6.4 Z" fill="#1a73e8"/><path d="M2.2 1.6 H11.6" stroke="#8ab4f8" stroke-width="0.8"/></svg>
<svg class="a" style="left:95px;top:464px;" width="13" height="13" viewBox="0 0 13 13"><circle cx="5" cy="5" r="3.9" fill="none" stroke="#5f6368" stroke-width="1.5"/><path d="M7.8 7.8 L12 12" stroke="#5f6368" stroke-width="1.7"/></svg>
<div class="a" style="left:118.3px;top:462.5px;width:1px;height:15px;background:#cbcdd1;"></div>
<div class="a" style="left:128.2px;top:464.3px;width:11.6px;height:11.6px;background:#fff;border:1px solid #767676;border-radius:2px;"></div>
<span class="a t" style="left:145.5px;top:462px;font-size:11.5px;line-height:16px;color:#333;letter-spacing:-0.403px;transform:scaleX(0.9978);transform-origin:left center;">Preserve log</span>
<div class="a" style="left:214.4px;top:462.5px;width:1px;height:15px;background:#cbcdd1;"></div>
<div class="a" style="left:223.8px;top:464.2px;width:11.8px;height:11.8px;background:#1a73e8;border-radius:2px;"></div>
<svg class="a" style="left:223.8px;top:464.2px;" width="11.8" height="11.8" viewBox="0 0 11.8 11.8"><path d="M2.6 6.2 L4.9 8.5 L9.3 3.4" fill="none" stroke="#fff" stroke-width="1.6"/></svg>
<span class="a t" style="left:241.3px;top:462px;font-size:11.5px;line-height:16px;color:#333;letter-spacing:-0.403px;transform:scaleX(0.9910);transform-origin:left center;">Disable cache</span>
<span class="a t" style="left:318.8px;top:462px;font-size:11.5px;line-height:16px;color:#62676c;letter-spacing:0.150px;">No throttling</span>
<svg class="a" style="left:400px;top:467.6px;" width="7" height="5" viewBox="0 0 7 5"><path d="M0 0 H7 L3.5 5 Z" fill="#5f6368"/></svg>
<svg class="a" style="left:420.5px;top:462.8px;" width="16" height="13.5" viewBox="0 0 16 13.5"><g fill="none" stroke="#5f6368" stroke-width="1.5"><path d="M0.8 4.4 C4.2 0.6 10 0.6 13.4 4.4"/><path d="M3.2 6.8 C5.2 4.6 9 4.6 11 6.8"/></g><circle cx="7.1" cy="9.4" r="1.3" fill="#5f6368"/><circle cx="12.2" cy="10" r="2.6" fill="#5f6368"/><circle cx="12.2" cy="10" r="1" fill="#f1f3f4"/><path d="M12.2 6.8 V13.2 M9 10 H15.4 M10 7.8 L14.4 12.2 M14.4 7.8 L10 12.2" stroke="#5f6368" stroke-width="0.9"/><circle cx="12.2" cy="10" r="1" fill="#f1f3f4"/></svg>
<div class="a" style="left:444.2px;top:462.5px;width:1px;height:15px;background:#cbcdd1;"></div>
<svg class="a" style="left:456.5px;top:463.8px;" width="10" height="11.5" viewBox="0 0 10 11.5"><path d="M5 0.2 L9.6 5.2 H6.8 V8.4 H3.2 V5.2 H0.4 Z" fill="#5f6368"/><rect x="0.4" y="10" width="9.2" height="1.5" fill="#5f6368"/></svg>
<svg class="a" style="left:482.5px;top:463.8px;" width="10" height="11.5" viewBox="0 0 10 11.5"><path d="M5 8.6 L9.6 3.6 H6.8 V0.2 H3.2 V3.6 H0.4 Z" fill="#5f6368"/><rect x="0.4" y="10" width="9.2" height="1.5" fill="#5f6368"/></svg>
<div class="a" style="left:1308px;top:462.5px;width:1px;height:15px;background:#cbcdd1;"></div>
<svg class="a" style="left:1318px;top:462.6px;" width="14" height="14" viewBox="0 0 14 14"><path d="M7 4.7 A2.3 2.3 0 1 0 7 9.3 A2.3 2.3 0 1 0 7 4.7 Z M5.9 0.4 H8.1 L8.5 2.1 L9.6 2.6 L11.1 1.7 L12.6 3.2 L11.7 4.7 L12.1 5.8 L13.8 6.2 V8 L12.1 8.4 L11.7 9.5 L12.6 11 L11.1 12.5 L9.6 11.6 L8.5 12.1 L8.1 13.8 H5.9 L5.5 12.1 L4.4 11.6 L2.9 12.5 L1.4 11 L2.3 9.5 L1.9 8.4 L0.2 8 V6.2 L1.9 5.8 L2.3 4.7 L1.4 3.2 L2.9 1.7 L4.4 2.6 L5.5 2.1 Z" fill="#5f6368" fill-rule="evenodd"/></svg>
<div class="a" style="left:3.5px;top:485.5px;width:151.5px;height:17px;background:#fff;"></div>
<span class="a t" style="left:7px;top:487px;font-size:11.5px;line-height:16px;color:#84898e;letter-spacing:-0.391px;">Filter</span>
<div class="a" style="left:167.4px;top:488.4px;width:11.4px;height:11.4px;background:#fff;border:1px solid #767676;border-radius:2px;"></div>
<span class="a t" style="left:184.3px;top:487px;font-size:11.5px;line-height:16px;color:#333;letter-spacing:-0.192px;">Invert</span>
<div class="a" style="left:221.6px;top:488.4px;width:11.4px;height:11.4px;background:#fff;border:1px solid #767676;border-radius:2px;"></div>
<span class="a t" style="left:238.8px;top:487px;font-size:11.5px;line-height:16px;color:#333;letter-spacing:-0.403px;transform:scaleX(0.9796);transform-origin:left center;">Hide data URLs</span>
<div class="a" style="left:319.3px;top:485px;width:18.6px;height:19.4px;background:#cdd0d4;border-radius:4px;"></div>
<span class="a t" style="left:322.6px;top:487px;font-size:11.5px;line-height:16px;color:#333;letter-spacing:-0.391px;">All</span>
<div class="a" style="left:342px;top:486.5px;width:1px;height:15px;background:#cbcdd1;"></div>
<span class="a t" style="left:349.3px;top:487px;font-size:11.5px;line-height:16px;color:#333;letter-spacing:-0.403px;transform:scaleX(0.9657);transform-origin:left center;">Fetch/XHR</span>
<span class="a t" style="left:410.2px;top:487px;font-size:11.5px;line-height:16px;color:#333;letter-spacing:-0.403px;transform:scaleX(0.7528);transform-origin:left center;">JS</span>
<span class="a t" style="left:429.6px;top:487px;font-size:11.5px;line-height:16px;color:#333;letter-spacing:-0.403px;transform:scaleX(0.8055);transform-origin:left center;">CSS</span>
<span class="a t" style="left:457.6px;top:487px;font-size:11.5px;line-height:16px;color:#333;letter-spacing:-0.385px;">Img</span>
<span class="a t" style="left:486.4px;top:487px;font-size:11.5px;line-height:16px;color:#333;letter-spacing:-0.381px;">Media</span>
<span class="a t" style="left:526px;top:487px;font-size:11.5px;line-height:16px;color:#333;letter-spacing:-0.204px;">Font</span>
<span class="a t" style="left:557.4px;top:487px;font-size:11.5px;line-height:16px;color:#333;letter-spacing:-0.403px;transform:scaleX(0.9671);transform-origin:left center;">Doc</span>
<span class="a t" style="left:586px;top:487px;font-size:11.5px;line-height:16px;color:#333;letter-spacing:-0.403px;transform:scaleX(0.9050);transform-origin:left center;">WS</span>
<span class="a t" style="left:611.4px;top:487px;font-size:11.5px;line-height:16px;color:#333;letter-spacing:-0.403px;transform:scaleX(0.9694);transform-origin:left center;">Wasm</span>
<span class="a t" style="left:651px;top:487px;font-size:11.5px;line-height:16px;color:#333;letter-spacing:-0.152px;">Manifest</span>
<span class="a t" style="left:703px;top:487px;font-size:11.5px;line-height:16px;color:#333;letter-spacing:-0.090px;">Other</span>
<div class="a" style="left:745px;top:488.4px;width:11.4px;height:11.4px;background:#fff;border:1px solid #767676;border-radius:2px;"></div>
<span class="a t" style="left:762px;top:487px;font-size:11.5px;line-height:16px;color:#333;letter-spacing:-0.282px;">Has blocked cookies</span>
<div class="a" style="left:871.6px;top:488.4px;width:11.4px;height:11.4px;background:#fff;border:1px solid #767676;border-radius:2px;"></div>
<span class="a t" style="left:888.8px;top:487px;font-size:11.5px;line-height:16px;color:#333;letter-spacing:-0.403px;transform:scaleX(0.9878);transform-origin:left center;">Blocked Requests</span>
<div class="a" style="left:983.4px;top:488.4px;width:11.4px;height:11.4px;background:#fff;border:1px solid #767676;border-radius:2px;"></div>
<span class="a t" style="left:1000.6px;top:487px;font-size:11.5px;line-height:16px;color:#333;letter-spacing:-0.160px;">3rd-party requests</span>
<div class="a" style="left:0px;top:506px;width:2px;height:16px;background:#8a8a8a;"></div>
<div class="a" style="left:101px;top:506px;width:1px;height:74px;background:#e1e3e5;"></div>
<span class="a t" style="left:76.10000000000001px;top:509px;font-size:9px;line-height:14px;color:#3c4043;letter-spacing:-0.302px;">20 ms</span>
<div class="a" style="left:202px;top:506px;width:1px;height:74px;background:#e1e3e5;"></div>
<span class="a t" style="left:177.1px;top:509px;font-size:9px;line-height:14px;color:#3c4043;letter-spacing:-0.302px;">40 ms</span>
<div class="a" style="left:303px;top:506px;width:1px;height:74px;background:#e1e3e5;"></div>
<span class="a t" style="left:278.09999999999997px;top:509px;font-size:9px;line-height:14px;color:#3c4043;letter-spacing:-0.302px;">60 ms</span>
<div class="a" style="left:405px;top:506px;width:1px;height:74px;background:#e1e3e5;"></div>
<span class="a t" style="left:380.09999999999997px;top:509px;font-size:9px;line-height:14px;color:#3c4043;letter-spacing:-0.302px;">80 ms</span>
<div class="a" style="left:506px;top:506px;width:1px;height:74px;background:#e1e3e5;"></div>
<span class="a t" style="left:476.0px;top:509px;font-size:9px;line-height:14px;color:#3c4043;letter-spacing:-0.223px;">100 ms</span>
<div class="a" style="left:607px;top:506px;width:1px;height:74px;background:#e1e3e5;"></div>
<span class="a t" style="left:577.0px;top:509px;font-size:9px;line-height:14px;color:#3c4043;letter-spacing:-0.223px;">120 ms</span>
<div class="a" style="left:708px;top:506px;width:1px;height:74px;background:#e1e3e5;"></div>
<span class="a t" style="left:678.0px;top:509px;font-size:9px;line-height:14px;color:#3c4043;letter-spacing:-0.223px;">140 ms</span>
<div class="a" style="left:810px;top:506px;width:1px;height:74px;background:#e1e3e5;"></div>
<span class="a t" style="left:780.0px;top:509px;font-size:9px;line-height:14px;color:#3c4043;letter-spacing:-0.223px;">160 ms</span>
<div class="a" style="left:911px;top:506px;width:1px;height:74px;background:#e1e3e5;"></div>
<span class="a t" style="left:881.0px;top:509px;font-size:9px;line-height:14px;color:#3c4043;letter-spacing:-0.223px;">180 ms</span>
<div class="a" style="left:1012px;top:506px;width:1px;height:74px;background:#e1e3e5;"></div>
<span class="a t" style="left:982.0px;top:509px;font-size:9px;line-height:14px;color:#3c4043;letter-spacing:-0.223px;">200 ms</span>
<div class="a" style="left:1113px;top:506px;width:1px;height:74px;background:#e1e3e5;"></div>
<span class="a t" style="left:1083.0px;top:509px;font-size:9px;line-height:14px;color:#3c4043;letter-spacing:-0.223px;">220 ms</span>
<div class="a" style="left:1214px;top:506px;width:1px;height:74px;background:#e1e3e5;"></div>
<span class="a t" style="left:1184.0px;top:509px;font-size:9px;line-height:14px;color:#3c4043;letter-spacing:-0.223px;">240 ms</span>
<div class="a" style="left:1316px;top:506px;width:1px;height:74px;background:#e1e3e5;"></div>
<span class="a t" style="left:1286.0px;top:509px;font-size:9px;line-height:14px;color:#3c4043;letter-spacing:-0.223px;">260 ms</span>
<div class="a" style="left:0px;top:535px;width:23.5px;height:2px;background:#a9abad;"></div>
<div class="a" style="left:25px;top:535px;width:7px;height:2px;background:#a9abad;"></div>
<div class="a" style="left:35.5px;top:535px;width:1079px;height:2px;background:#1fa84f;"></div>
<div class="a" style="left:1114.5px;top:535px;width:204px;height:2px;background:#2d9be6;"></div>
<div class="a" style="left:1337.6px;top:507px;width:2.4px;height:15.5px;background:#7d7d7d;"></div>
<div class="a" style="left:0px;top:580px;width:1340px;height:1px;background:#cbcdd1;"></div>
<svg class="a" style="left:77px;top:502.5px;" width="13" height="20" viewBox="0 0 13 20"><path d="M1 0.8 V16.2 L4.6 12.8 L7.2 18.8 L9.6 17.8 L7 12 H11.8 Z" fill="#fff" stroke="#111" stroke-width="1"/></svg>
<div class="a" style="left:0px;top:581px;width:1340px;height:26px;background:#f1f3f4;border-bottom:1px solid #cbcdd1;"></div>
<div class="a" style="left:427.0px;top:581px;width:1px;height:140px;background:#cfd1d5;"></div>
<div class="a" style="left:555.3px;top:581px;width:1px;height:140px;background:#cfd1d5;"></div>
<div class="a" style="left:682.5px;top:581px;width:1px;height:140px;background:#cfd1d5;"></div>
<div class="a" style="left:897.0px;top:581px;width:1px;height:140px;background:#cfd1d5;"></div>
<div class="a" style="left:1024.5px;top:581px;width:1px;height:140px;background:#cfd1d5;"></div>
<div class="a" style="left:1153.0px;top:581px;width:1px;height:140px;background:#cfd1d5;"></div>
<div class="a" style="left:1225px;top:607px;width:1px;height:114px;background:#e6e7e9;"></div>
<div class="a" style="left:1296px;top:607px;width:1px;height:114px;background:#e6e7e9;"></div>
<span class="a t" style="left:5.4px;top:587px;font-size:11.5px;line-height:16px;color:#333;letter-spacing:0.574px;">Name</span>
<span class="a t" style="left:432.6px;top:587px;font-size:11.5px;line-height:16px;color:#333;letter-spacing:-0.403px;transform:scaleX(0.9546);transform-origin:left center;">Status</span>
<span class="a t" style="left:560.3px;top:587px;font-size:11.5px;line-height:16px;color:#333;letter-spacing:-0.403px;transform:scaleX(0.9526);transform-origin:left center;">Type</span>
<span class="a t" style="left:688.4px;top:587px;font-size:11.5px;line-height:16px;color:#333;letter-spacing:0.011px;">Initiator</span>
<span class="a t" style="left:901.8px;top:587px;font-size:11.5px;line-height:16px;color:#333;letter-spacing:-0.403px;transform:scaleX(0.9025);transform-origin:left center;">Size</span>
<span class="a t" style="left:1030.4px;top:587px;font-size:11.5px;line-height:16px;color:#333;letter-spacing:-0.403px;transform:scaleX(0.9698);transform-origin:left center;">Time</span>
<span class="a t" style="left:1158px;top:587px;font-size:11.5px;line-height:16px;color:#333;letter-spacing:-0.168px;">Waterfall</span>
<svg class="a" style="left:1322px;top:591px;" width="8" height="6" viewBox="0 0 8 6"><path d="M0 6 H8 L4 0.4 Z" fill="#5f6368"/></svg>
<svg class="a" style="left:8px;top:612px;" width="10" height="11" viewBox="0 0 10 11"><rect x="0.6" y="0.6" width="8.4" height="9.8" fill="#fff" stroke="#9aa0a6" stroke-width="1"/><rect x="1.2" y="1.2" width="3.4" height="3.6" fill="#aecbfa"/><path d="M2 6.4 H7.6 M2 8.2 H7.6" stroke="#c3c7cc" stroke-width="0.8"/></svg>
<span class="a t" style="left:24px;top:610px;font-size:11.5px;line-height:16px;color:#333;letter-spacing:-0.403px;transform:scaleX(0.9936);transform-origin:left center;">0%20years%200%20months%200%20days%209%20hours%2015%20minutes%...</span>
<span class="a t" style="left:432.6px;top:610px;font-size:11.5px;line-height:16px;color:#333;letter-spacing:-0.403px;transform:scaleX(0.9465);transform-origin:left center;">200</span>
<span class="a t" style="left:560.3px;top:610px;font-size:11.5px;line-height:16px;color:#333;letter-spacing:0.118px;">text/html</span>
<span class="a t" style="left:688.2px;top:610px;font-size:11.5px;line-height:16px;color:#333;letter-spacing:-0.249px;text-decoration:underline;">jquery.min.js:2</span>
<span class="a t" style="left:986.7px;top:610px;font-size:11.5px;line-height:16px;color:#333;letter-spacing:-0.403px;transform:scaleX(0.9600);transform-origin:left center;">11.6 kB</span>
<span class="a t" style="left:1114.3px;top:610px;font-size:11.5px;line-height:16px;color:#333;letter-spacing:-0.403px;transform:scaleX(0.9804);transform-origin:left center;">255 ms</span>
<div class="a" style="left:1158px;top:614px;width:5px;height:7px;background:#fff;border:1px solid #b8bcc2;"></div>
<div class="a" style="left:1165px;top:611px;width:148px;height:12px;background:#0ba24a;"></div>
<div class="a" style="left:1313px;top:611px;width:26px;height:12px;background:#1a9ce6;"></div>
<div class="a" style="left:0px;top:721px;width:1340px;height:26px;background:#f1f3f4;border-top:1px solid #cbcdd1;"></div>
<span class="a t" style="left:11px;top:726px;font-size:11.5px;line-height:16px;color:#333;letter-spacing:-0.403px;transform:scaleX(0.9985);transform-origin:left center;">1 requests</span>
<div class="a" style="left:70px;top:727px;width:1px;height:14px;background:#cbcdd1;"></div>
<span class="a t" style="left:79px;top:726px;font-size:11.5px;line-height:16px;color:#333;letter-spacing:-0.275px;">11.6 kB transferred</span>
<div class="a" style="left:180px;top:727px;width:1px;height:14px;background:#cbcdd1;"></div>
<span class="a t" style="left:189px;top:726px;font-size:11.5px;line-height:16px;color:#333;letter-spacing:-0.403px;transform:scaleX(0.9954);transform-origin:left center;">11.6 kB resources</span>
<div class="a" style="left:0px;top:747px;width:1340px;height:53px;background:#1b3558;"></div>
<svg class="a" style="left:18.5px;top:765px;" width="15.5" height="15.5" viewBox="0 0 19 19"><rect x="0" y="0" width="19" height="19" rx="2.6" fill="#474747"/><path d="M15.5 2.9 L4.7 5.67 V10.27 L6.52 10.74 L4.7 11.2 V15.8 L15.5 13.04 V8.44 L13.67 7.97 L15.5 7.5 Z" fill="#ff9a0a"/></svg>
<span class="a t" style="left:46px;top:766px;font-size:12px;line-height:18px;color:#fff;letter-spacing:0.043px;">test.php</span>
<svg class="a" style="left:193px;top:770.4px;" width="10" height="6.4" viewBox="0 0 10 6.4"><path d="M0.8 5.6 L5 1.2 L9.2 5.6" fill="none" stroke="#dde3ec" stroke-width="1.5"/></svg>
<div class="a" style="left:220px;top:753.5px;width:1px;height:40px;background:#3a5276;"></div>
<div class="a" style="left:479px;top:752.6px;width:382px;height:38.8px;background:#f8f9fa;border-radius:1px;"></div>
<div class="a" style="left:488.6px;top:766.6px;width:1.5px;height:9.2px;background:#c4c7cc;"></div>
<div class="a" style="left:492.2px;top:766.6px;width:1.5px;height:9.2px;background:#c4c7cc;"></div>
<span class="a t" style="left:503.4px;top:763px;font-size:12px;line-height:18px;color:#3c4043;letter-spacing:-0.420px;transform:scaleX(0.9893);transform-origin:left center;">srilance.softileo.com is sharing your screen.</span>
<div class="a" style="left:725.2px;top:757px;width:93.6px;height:29.8px;background:#1a68d6;border-radius:4px;"></div>
<span class="a t" style="left:740px;top:763px;font-size:12px;line-height:18px;color:#fff;letter-spacing:-0.420px;transform:scaleX(0.9226);transform-origin:left center;font-weight:700;">Stop sharing</span>
<span class="a t" style="left:828.8px;top:763px;font-size:12px;line-height:18px;color:#2b6bd3;letter-spacing:-0.420px;transform:scaleX(0.9564);transform-origin:left center;">Hide</span>
<div class="a" style="left:1234.3px;top:758.3px;width:72.2px;height:29.4px;background:#223c62;border:1px solid #8493ab;border-radius:4px;"></div>
<span class="a t" style="left:1248.6px;top:764px;font-size:12px;line-height:18px;color:#fff;letter-spacing:-0.420px;transform:scaleX(0.9315);transform-origin:left center;font-weight:700;">Show all</span>
<svg class="a" style="left:1318.4px;top:768.2px;" width="9.6" height="9.6" viewBox="0 0 9.6 9.6"><path d="M0.6 0.6 L9 9 M9 0.6 L0.6 9" stroke="#dfe4ec" stroke-width="1.4"/></svg>
<div class="a" style="left:0px;top:800px;width:1340px;height:37px;background:#222223;"></div>
<svg class="a" style="left:15px;top:811px;" width="15.4" height="15.4" viewBox="0 0 15.4 15.4"><path d="M0 2.2 L6.2 1.3 V7.3 H0 Z M7 1.2 L15.4 0 V7.3 H7 Z M0 8.1 H6.2 V14.1 L0 13.2 Z M7 8.1 H15.4 V15.4 L7 14.2 Z" fill="#fff"/></svg>
<div class="a" style="left:45.3px;top:800.4px;width:319px;height:36.6px;background:#f3f3f3;"></div>
<svg class="a" style="left:55px;top:810px;" width="16" height="16" viewBox="0 0 16 16"><circle cx="9.8" cy="6" r="4.8" fill="none" stroke="#333" stroke-width="1.3"/><path d="M6.4 9.4 L1 14.8" stroke="#333" stroke-width="1.4"/></svg>
<span class="a t" style="left:82.3px;top:808px;font-size:15px;line-height:21px;color:#3a3a3a;letter-spacing:-0.525px;transform:scaleX(0.9624);transform-origin:left center;">Type here to search</span>
<svg class="a" style="left:379px;top:810.4px;" width="16" height="16" viewBox="0 0 16 16"><circle cx="8" cy="8" r="6.2" fill="none" stroke="#fff" stroke-width="1.7"/></svg>
<svg class="a" style="left:423px;top:810.5px;" width="17" height="15" viewBox="0 0 17 15"><g fill="none" stroke="#fff" stroke-width="1.1"><rect x="1.6" y="4.2" width="10" height="6.4"/><path d="M1.6 2.8 V1.3 H11.6 V2.8 M1.6 12.2 V13.7 H11.6 V12.2"/><path d="M15 0.8 V14.2"/></g><rect x="14" y="4.4" width="2" height="2.2" fill="#fff"/></svg>
<svg class="a" style="left:468px;top:807.4px;" width="22" height="22" viewBox="0 0 19 19"><rect x="0" y="0" width="19" height="19" rx="2" fill="#414141"/><path d="M15.5 2.9 L4.7 5.67 V10.27 L6.52 10.74 L4.7 11.2 V15.8 L15.5 13.04 V8.44 L13.67 7.97 L15.5 7.5 Z" fill="#ff9a0a"/></svg>
<div class="a" style="left:460px;top:835px;width:38px;height:2px;background:#7fbdf0;"></div>
<svg class="a" style="left:514px;top:809px;" width="21" height="18" viewBox="0 0 21 18"><path d="M0.6 2.2 Q0.6 1 1.8 1 H7.4 L9.4 3 H19.2 Q20.4 3 20.4 4.2 V16 Q20.4 17.2 19.2 17.2 H1.8 Q0.6 17.2 0.6 16 Z" fill="#f7b92c"/><rect x="0.6" y="5.4" width="19.8" height="11.8" rx="1" fill="#fdd767"/><rect x="5.6" y="10.4" width="9.8" height="6.8" fill="#3f8fd8"/><rect x="8" y="13.4" width="5" height="3.8" fill="#fdd767"/></svg>
<div class="a" style="left:506px;top:835px;width:38px;height:2px;background:#7fbdf0;"></div>
<svg class="a" style="left:559px;top:808px;" width="23" height="21" viewBox="0 0 23 21"><ellipse cx="12" cy="8" rx="10.4" ry="6.4" fill="#f1f1f1" stroke="#c23a3a" stroke-width="1.5" transform="rotate(-18 12 8)"/><path d="M9 5 L17.6 16.4 M15.6 4.6 L7.6 15.4" stroke="#9aa4b0" stroke-width="1.7"/><circle cx="18.6" cy="17.6" r="2.2" fill="none" stroke="#2d7bd0" stroke-width="1.6"/><circle cx="6.6" cy="17" r="2.2" fill="none" stroke="#2d7bd0" stroke-width="1.6"/></svg>
<div class="a" style="left:594px;top:800px;width:41.5px;height:37px;background:#4b4b4c;"></div>
<div class="a" style="left:635.5px;top:800px;width:3px;height:37px;background:#333334;"></div>
<div class="a" style="left:638.5px;top:800px;width:1px;height:37px;background:#48484a;"></div>
<div class="a" style="left:594px;top:835px;width:45px;height:2px;background:#7fbdf0;"></div>
<svg class="a" style="left:605px;top:808px;" width="24" height="22" viewBox="0 0 24 22"><circle cx="9.6" cy="9.6" r="9.4" fill="#fff"/><path d="M9.6 0.2 A9.4 9.4 0 0 1 17.8 5 H9.6 A4.6 4.6 0 0 0 5.5 7.4 L2 2.6 A9.4 9.4 0 0 1 9.6 0.2 Z" fill="#e33b2e"/><path d="M17.8 5 A9.4 9.4 0 0 1 9 19 L13.6 12 A4.6 4.6 0 0 0 13.7 7.4 L9.6 5 Z" fill="#f9bd15"/><path d="M2 2.6 L5.6 11.9 A4.6 4.6 0 0 0 11 14 L9 19 A9.4 9.4 0 0 1 2 2.6 Z" fill="#2da94f"/><circle cx="9.6" cy="9.6" r="3.6" fill="#4285f4" stroke="#fff" stroke-width="1"/><circle cx="17" cy="15" r="6" fill="#dfe1e5"/><circle cx="17" cy="13.2" r="2" fill="#4a4d52"/><path d="M13.2 18 C13.2 15.8 15.4 15.6 17 15.6 C18.6 15.6 20.8 15.8 20.8 18 Z" fill="#4a4d52"/></svg>
<svg class="a" style="left:650.5px;top:808px;" width="21.5" height="21.5" viewBox="0 0 21.5 21.5"><rect x="0" y="0" width="21.5" height="21.5" rx="1.5" fill="#b40a0a"/><rect x="1.2" y="1.2" width="19.1" height="19.1" fill="#9c0606"/></svg>
<span class="a t" style="left:653.4px;top:809px;font-size:15.5px;line-height:21px;color:#fff;letter-spacing:-0.543px;transform:scaleX(0.9355);transform-origin:left center;font-weight:700;font-style:italic;">Fz</span>
<div class="a" style="left:643px;top:835px;width:38px;height:2px;background:#7fbdf0;"></div>
<svg class="a" style="left:694px;top:808px;" width="23" height="21" viewBox="0 0 23 21"><rect x="6.4" y="0.6" width="15.6" height="19.4" fill="#fff" stroke="#c9d3e3" stroke-width="0.8"/><path d="M14 4 H20 M14 7 H20 M14 10 H20 M14 13 H20 M14 16 H20" stroke="#9fb6dc" stroke-width="0.9"/><rect x="0.4" y="3.2" width="14" height="14.4" fill="#2a5699"/></svg>
<span class="a t" style="left:696.4px;top:808px;font-size:12.5px;line-height:18px;color:#fff;letter-spacing:-0.438px;transform:scaleX(0.8979);transform-origin:left center;font-weight:700;">W</span>
<div class="a" style="left:730px;top:800px;width:45px;height:37px;background:#b0682a;"></div>
<div class="a" style="left:730px;top:835px;width:45px;height:2px;background:#ff9a2e;"></div>
<svg class="a" style="left:743.5px;top:809.5px;" width="19" height="19" viewBox="0 0 19 19"><path d="M0 0 H19 V11.4 L11.4 19 H0 Z" fill="#fcd116"/><path d="M19 11.4 L11.4 19 V11.4 Z" fill="#2b2b2b"/></svg>
<svg class="a" style="left:787.6px;top:808px;" width="24" height="22" viewBox="0 0 24 22"><circle cx="9.6" cy="9.6" r="9.4" fill="#fff"/><path d="M9.6 0.2 A9.4 9.4 0 0 1 17.8 5 H9.6 A4.6 4.6 0 0 0 5.5 7.4 L2 2.6 A9.4 9.4 0 0 1 9.6 0.2 Z" fill="#e33b2e"/><path d="M17.8 5 A9.4 9.4 0 0 1 9 19 L13.6 12 A4.6 4.6 0 0 0 13.7 7.4 L9.6 5 Z" fill="#f9bd15"/><path d="M2 2.6 L5.6 11.9 A4.6 4.6 0 0 0 11 14 L9 19 A9.4 9.4 0 0 1 2 2.6 Z" fill="#2da94f"/><circle cx="9.6" cy="9.6" r="3.6" fill="#4285f4" stroke="#fff" stroke-width="1"/><circle cx="17" cy="15" r="6" fill="#dfe1e5"/><circle cx="17" cy="13.2" r="2" fill="#4a4d52"/><path d="M13.2 18 C13.2 15.8 15.4 15.6 17 15.6 C18.6 15.6 20.8 15.8 20.8 18 Z" fill="#4a4d52"/></svg>
<div class="a" style="left:780px;top:835px;width:38px;height:2px;background:#7fbdf0;"></div>
<svg class="a" style="left:1056px;top:809.8px;" width="17.2" height="17.2" viewBox="0 0 17.2 17.2"><defs><radialGradient id="sun" cx="40%" cy="32%" r="75%"><stop offset="0" stop-color="#ffe36a"/><stop offset="0.6" stop-color="#ffc62e"/><stop offset="1" stop-color="#f39a12"/></radialGradient></defs><circle cx="8.6" cy="8.6" r="8.6" fill="url(#sun)"/></svg>
<span class="a t" style="left:1083.6px;top:812px;font-size:11.6px;line-height:16px;color:#fff;letter-spacing:0.093px;">32°C</span>
<span class="a t" style="left:1118.8px;top:812px;font-size:11.6px;line-height:16px;color:#fff;letter-spacing:0.527px;">Sunny</span>
<svg class="a" style="left:1169.6px;top:814.6px;" width="12" height="7" viewBox="0 0 12 7"><path d="M0.8 6.2 L6 1 L11.2 6.2" fill="none" stroke="#fff" stroke-width="1.2"/></svg>
<svg class="a" style="left:1190px;top:812.6px;" width="16" height="13" viewBox="0 0 16 13"><g fill="none" stroke="#fff" stroke-width="1"><rect x="2.6" y="1" width="12.4" height="8"/><path d="M8.8 9 V11.6 M5.4 11.8 H12.2"/><rect x="0.6" y="0.6" width="3.4" height="3.6" fill="#222223"/><path d="M2.3 4.2 V11.8 H5.4"/></g></svg>
<svg class="a" style="left:1212px;top:812px;" width="16" height="13" viewBox="0 0 16 13"><path d="M1 4.6 H3.6 L7 1.4 V11.6 L3.6 8.4 H1 Z" fill="none" stroke="#fff" stroke-width="1"/><path d="M9 4.6 Q10.2 6.5 9 8.4" fill="none" stroke="#fff" stroke-width="1"/><path d="M11 3 Q13.2 6.5 11 10" fill="none" stroke="#9b9c9e" stroke-width="1"/><path d="M13 1.6 Q16 6.5 13 11.4" fill="none" stroke="#6b6c6e" stroke-width="1"/></svg>
<span class="a t" style="left:1238.8px;top:801px;font-size:11.6px;line-height:16px;color:#fff;letter-spacing:-0.406px;transform:scaleX(0.9400);transform-origin:left center;">12:57 PM</span>
<span class="a t" style="left:1234.8px;top:819px;font-size:11.6px;line-height:16px;color:#fff;letter-spacing:-0.406px;transform:scaleX(0.9749);transform-origin:left center;">10/11/2021</span>
<svg class="a" style="left:1302.4px;top:811px;" width="15" height="13" viewBox="0 0 15 13"><path d="M0.4 0.4 H14.6 V10 H5 L2.6 12.6 V10 H0.4 Z" fill="#fff"/><path d="M2.6 2.8 H12.4 M2.6 5 H12.4 M2.6 7.2 H9" stroke="#222223" stroke-width="0.9"/></svg>
<svg class="a" style="left:1308.4px;top:817.4px;" width="15.4" height="15.4" viewBox="0 0 15.4 15.4"><circle cx="7.7" cy="7.7" r="7" fill="#222223" stroke="#9a9b9d" stroke-width="1"/></svg>
<span class="a t" style="left:1313px;top:817px;font-size:10.5px;line-height:16px;color:#fff;font-weight:700;">2</span>
<div class="a" style="left:1335px;top:800px;width:1px;height:37px;background:#6a6b6e;"></div>
</body></html>
